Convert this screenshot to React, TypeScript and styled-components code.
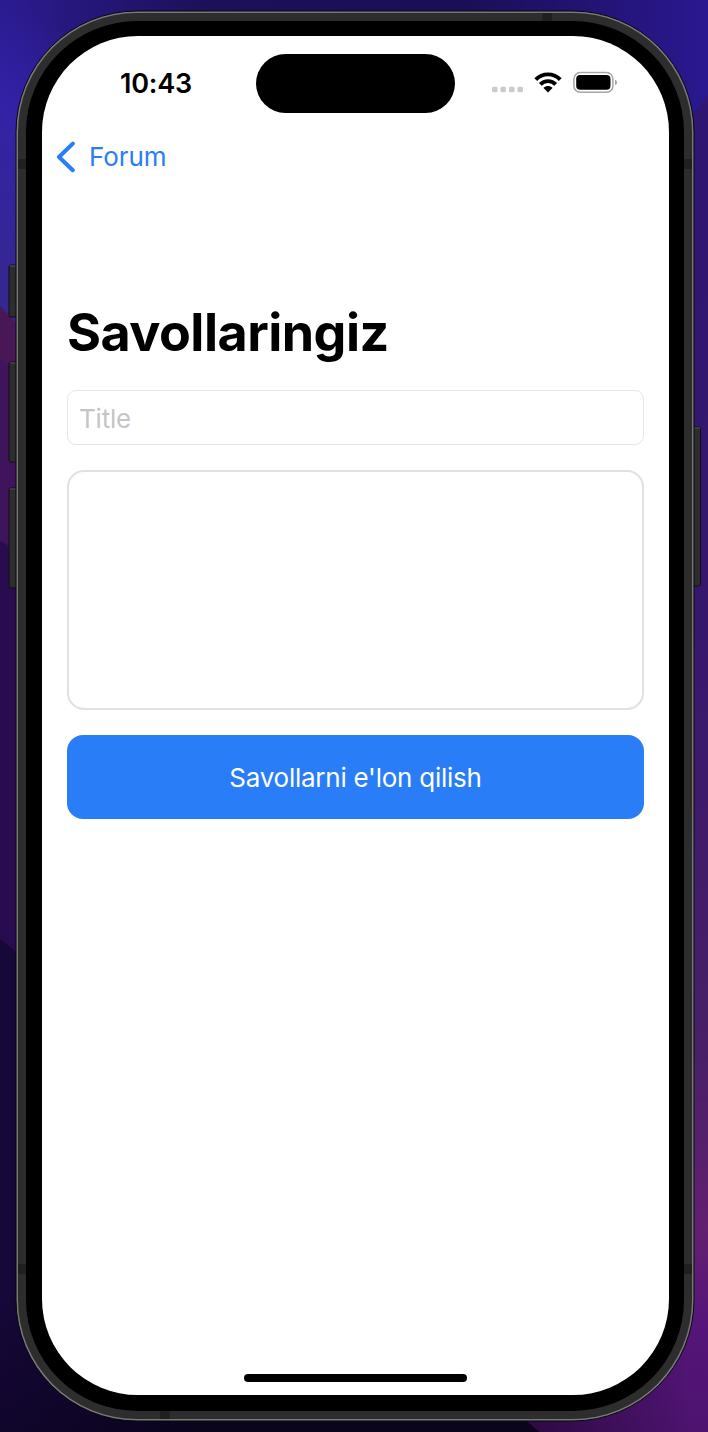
import React from "react";
import styled, { createGlobalStyle } from "styled-components";

const GlobalStyle = createGlobalStyle`
  body { margin: 0; background: #160838; }
  * { box-sizing: border-box; }
`;

const Desktop = styled.main`
  position: relative;
  width: 708px;
  height: 1432px;
  padding: 36px 39px 37px 42px;
  overflow: hidden;
  font-family: Inter, "Liberation Sans", sans-serif;
`;

const Artwork = styled.svg`
  position: absolute;
  inset: 0;
`;

const Screen = styled.section`
  position: relative;
  display: flex;
  flex-direction: column;
  height: 1359px;
  border-radius: 96px;
  background: #fff;
`;

const StatusBar = styled.header`
  display: grid;
  grid-template-columns: 214px 199px 1fr;
  align-items: center;
  height: 94px;
`;

const Clock = styled.time`
  padding-left: 78px;
  font-size: 27px;
  font-weight: 600;
  letter-spacing: -0.2px;
`;

const Island = styled.div`
  height: 59px;
  border-radius: 30px;
  background: #000;
`;

const Indicators = styled.svg`
  display: block;
`;

const NavBar = styled.nav`
  display: flex;
  align-items: center;
  gap: 13px;
  height: 53px;
  padding-left: 14px;
  color: #297df6;
  font-size: 26px;
`;

const BackLabel = styled.span`
  letter-spacing: -0.1px;
`;

const Form = styled.div`
  display: flex;
  flex-direction: column;
  padding: 116px 25px 0;
`;

const Heading = styled.h1`
  margin: 0 0 23px;
  font-size: 52px;
  line-height: 68px;
  font-weight: 700;
  letter-spacing: -0.53px;
`;

const TitleField = styled.input`
  height: 55px;
  margin-bottom: 25px;
  padding: 2px 11px 0;
  border: 1px solid #e5e5e5;
  border-radius: 9px;
  outline: none;
  font: 400 26px Inter, sans-serif;
  letter-spacing: -0.2px;
  &::placeholder { color: #c5c5c7; }
`;

const BodyField = styled.textarea`
  height: 240px;
  margin-bottom: 25px;
  border: 2px solid #e1e1e1;
  border-radius: 17px;
  outline: none;
  resize: none;
`;

const SubmitButton = styled.button`
  height: 84px;
  border: 0;
  border-radius: 16px;
  background: #297df6;
  color: #fff;
  font: 400 26px Inter, sans-serif;
  letter-spacing: -0.24px;
`;

const HomeIndicator = styled.div`
  width: 223px;
  height: 8px;
  margin: auto auto 13px 202px;
  border-radius: 4px;
  background: #000;
`;

function Wallpaper() {
  return (
    <Artwork width="708" height="1432" aria-hidden="true">
      <defs>
        <linearGradient id="top">
          <stop stopColor="#2b1b90" />
          <stop offset=".3" stopColor="#1c1058" />
          <stop offset=".65" stopColor="#1a0e56" />
          <stop offset="1" stopColor="#2a1890" />
        </linearGradient>
        <radialGradient id="glow" gradientUnits="userSpaceOnUse" cx="0" cy="0" r="1" gradientTransform="translate(0 110) scale(95 110)">
          <stop stopColor="#3422a8" />
          <stop offset="1" stopColor="#3422a8" stopOpacity="0" />
        </radialGradient>
        <linearGradient id="left" x2="0" y2="1">
          <stop stopColor="#3422a6" />
          <stop offset="1" stopColor="#35288c" />
        </linearGradient>
        <linearGradient id="right" gradientUnits="userSpaceOnUse" x1="0" y1="95" x2="0" y2="1432">
          <stop stopColor="#2e1672" />
          <stop offset=".4" stopColor="#37176c" />
          <stop offset=".72" stopColor="#492067" />
          <stop offset=".85" stopColor="#631f70" />
          <stop offset=".92" stopColor="#551579" />
          <stop offset="1" stopColor="#4d136f" />
        </linearGradient>
        <linearGradient id="floor" x2="0" y2="1">
          <stop stopColor="#160838" />
          <stop offset="1" stopColor="#10052c" />
        </linearGradient>
        <linearGradient id="shade">
          <stop stopColor="#0a041c" stopOpacity="0" />
          <stop offset=".3" stopColor="#0a041c" />
        </linearGradient>
        <linearGradient id="corner" gradientUnits="userSpaceOnUse" x1="527" y1="0" x2="690" y2="0">
          <stop stopColor="#2c0a42" />
          <stop offset="1" stopColor="#2c0a42" stopOpacity="0" />
        </linearGradient>
      </defs>
      <rect width="708" height="330" fill="url(#top)" />
      <path d="M0 0H100V120H0Z" fill="url(#glow)" />
      <path d="M0 110H20V330H0Z" fill="url(#left)" />
      <path d="M0 306L20 327V560H0Z" fill="#481856" />
      <path d="M0 358L20 372V560H0Z" fill="#40145c" />
      <path d="M0 541L20 552V960H0Z" fill="#290c50" />
      <path d="M0 939L20 955V1432H0Z" fill="#160838" />
      <path d="M0 1300H708V1432H0Z" fill="url(#floor)" />
      <path d="M0 1300H708V1432H0Z" fill="url(#shade)" />
      <path d="M708 95L650 170V1380L527 1421L540 1432H708Z" fill="url(#right)" />
      <path d="M527 1421L650 1340H708V1432H540Z" fill="url(#corner)" />
    </Artwork>
  );
}

const sideButtons = [
  { x: 9, y: 265, h: 52 },
  { x: 9, y: 362, h: 100 },
  { x: 9, y: 488, h: 100 },
  { x: 690, y: 427, h: 159 },
];

const antennaBands = [
  [18, 159, 8, 10], [684, 159, 8, 10], [18, 1264, 8, 10],
  [684, 1264, 8, 10], [542, 13, 10, 8], [160, 1411, 10, 8],
];

function DeviceFrame() {
  return (
    <Artwork width="708" height="1432" aria-hidden="true">
      {sideButtons.map(({ x, y, h }) => (
        <g key={`${x}-${y}`}>
          <rect x={x} y={y} width="10.5" height={h} rx="2" fill="#2d2d2d" stroke="#120c1c" />
          <path d={`M${x + 1} ${y + 1}h9`} stroke="#555" />
        </g>
      ))}
      <rect x="16" y="11" width="678" height="1410" rx="121" fill="#77777a" stroke="#08060d" />
      <rect x="18" y="13" width="674" height="1406" rx="119" fill="#2d2d2d" />
      {antennaBands.map(([x, y, w, h]) => (
        <rect key={`${x}-${y}`} x={x} y={y} width={w} height={h} fill="#202020" />
      ))}
      <rect x="26" y="21" width="658" height="1390" rx="111" fill="#000" />
    </Artwork>
  );
}

function StatusIcons() {
  return (
    <Indicators width="170" height="40" viewBox="0 0 170 40" aria-hidden="true">
      <g fill="#cbcbcb">
        {[37, 45.5, 54, 62.5].map((x) => (
          <rect key={x} x={x} y="23.7" width="5.5" height="5.5" rx="1.5" />
        ))}
      </g>
      <g fill="none" stroke="#000" strokeWidth="3.9">
        <path d="M80.8 16.6C87.4 9.6 98.6 9.6 105.2 16.6" />
        <path d="M85.3 21.4C89.4 17 96.6 17 100.7 21.4" />
      </g>
      <path d="M88.5 25C91.2 22.4 94.8 22.4 97.5 25L93 29.5Z" />
      <rect x="118.9" y="9.6" width="39" height="19.6" rx="6.3" fill="none" stroke="#a6a6a6" strokeWidth="1.5" />
      <rect x="121.2" y="12" width="34.3" height="14.8" rx="4" />
      <path d="M160 16.8Q162 17.4 162 19.4T160 22Z" fill="#a0a0a0" />
    </Indicators>
  );
}

export default function App() {
  return (
    <>
      <GlobalStyle />
      <Desktop>
        <Wallpaper />
        <DeviceFrame />
        <Screen>
          <StatusBar>
            <Clock>10:43</Clock>
            <Island />
            <StatusIcons />
          </StatusBar>
          <NavBar>
            <svg width="20" height="32" viewBox="0 0 20 32" fill="none" stroke="currentColor" strokeWidth="4.1" strokeLinecap="round" strokeLinejoin="round">
              <path d="M16.8 2.6L3 16L16.8 29.2" />
            </svg>
            <BackLabel>Forum</BackLabel>
          </NavBar>
          <Form>
            <Heading>Savollaringiz</Heading>
            <TitleField placeholder="Title" />
            <BodyField />
            <SubmitButton>Savollarni e'lon qilish</SubmitButton>
          </Form>
          <HomeIndicator />
        </Screen>
      </Desktop>
    </>
  );
}
